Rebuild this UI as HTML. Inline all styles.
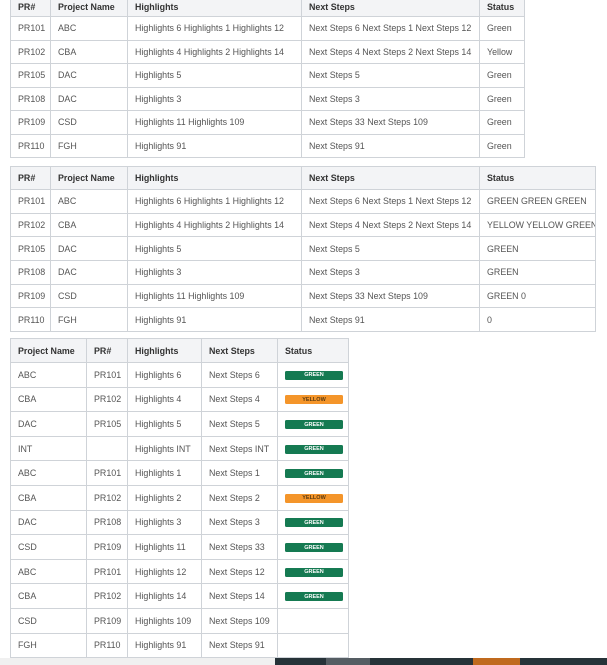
<!DOCTYPE html>
<html><head><meta charset="utf-8"><style>
body{margin:0;width:607px;height:665px;overflow:hidden;background:#fff;font-family:"Liberation Sans",sans-serif;font-size:8.9px;color:#555;position:relative}
table{position:absolute;border-collapse:collapse;table-layout:fixed}
td,th{border:1px solid #cfd3d8;padding:0 0 0 7px;text-align:left;white-space:nowrap;overflow:hidden}
th{background:#f3f4f6;color:#333;font-weight:bold;font-size:8.9px}
#t1{left:10px;top:-4px;width:514px}
#t1 th{height:19px}#t1 td{height:22.5px}
#t2{left:10px;top:166px;width:585px}
#t2 th{height:22px}#t2 td{height:22.7px}
#t3{left:10px;top:338px;width:338px}
#t3 th{height:23px}#t3 td{height:23.6px}
.b{display:inline-flex;align-items:center;justify-content:center;width:58px;height:9px;border-radius:1.5px;color:#fff;font-weight:bold;font-size:5.5px;vertical-align:middle}
.g{background:#157a52}.y{background:#f4952a;color:#5a3a10}
.bar{position:absolute;top:658px;height:7px}
</style></head><body>
<table id="t1"><colgroup><col style="width:40px"><col style="width:77px"><col style="width:174px"><col style="width:178px"><col style="width:45px"></colgroup>
<tr><th>PR#</th><th>Project Name</th><th>Highlights</th><th>Next Steps</th><th>Status</th></tr>
<tr><td>PR101</td><td>ABC</td><td>Highlights 6 Highlights 1 Highlights 12</td><td>Next Steps 6 Next Steps 1 Next Steps 12</td><td>Green</td></tr>
<tr><td>PR102</td><td>CBA</td><td>Highlights 4 Highlights 2 Highlights 14</td><td>Next Steps 4 Next Steps 2 Next Steps 14</td><td>Yellow</td></tr>
<tr><td>PR105</td><td>DAC</td><td>Highlights 5</td><td>Next Steps 5</td><td>Green</td></tr>
<tr><td>PR108</td><td>DAC</td><td>Highlights 3</td><td>Next Steps 3</td><td>Green</td></tr>
<tr><td>PR109</td><td>CSD</td><td>Highlights 11 Highlights 109</td><td>Next Steps 33 Next Steps 109</td><td>Green</td></tr>
<tr><td>PR110</td><td>FGH</td><td>Highlights 91</td><td>Next Steps 91</td><td>Green</td></tr>
</table>
<table id="t2"><colgroup><col style="width:40px"><col style="width:77px"><col style="width:174px"><col style="width:178px"><col style="width:116px"></colgroup>
<tr><th>PR#</th><th>Project Name</th><th>Highlights</th><th>Next Steps</th><th>Status</th></tr>
<tr><td>PR101</td><td>ABC</td><td>Highlights 6 Highlights 1 Highlights 12</td><td>Next Steps 6 Next Steps 1 Next Steps 12</td><td>GREEN GREEN GREEN</td></tr>
<tr><td>PR102</td><td>CBA</td><td>Highlights 4 Highlights 2 Highlights 14</td><td>Next Steps 4 Next Steps 2 Next Steps 14</td><td>YELLOW YELLOW GREEN</td></tr>
<tr><td>PR105</td><td>DAC</td><td>Highlights 5</td><td>Next Steps 5</td><td>GREEN</td></tr>
<tr><td>PR108</td><td>DAC</td><td>Highlights 3</td><td>Next Steps 3</td><td>GREEN</td></tr>
<tr><td>PR109</td><td>CSD</td><td>Highlights 11 Highlights 109</td><td>Next Steps 33 Next Steps 109</td><td>GREEN 0</td></tr>
<tr><td>PR110</td><td>FGH</td><td>Highlights 91</td><td>Next Steps 91</td><td>0</td></tr>
</table>
<table id="t3"><colgroup><col style="width:76px"><col style="width:41px"><col style="width:74px"><col style="width:76px"><col style="width:71px"></colgroup>
<tr><th>Project Name</th><th>PR#</th><th>Highlights</th><th>Next Steps</th><th>Status</th></tr>
<tr><td>ABC</td><td>PR101</td><td>Highlights 6</td><td>Next Steps 6</td><td><span class="b g">GREEN</span></td></tr>
<tr><td>CBA</td><td>PR102</td><td>Highlights 4</td><td>Next Steps 4</td><td><span class="b y">YELLOW</span></td></tr>
<tr><td>DAC</td><td>PR105</td><td>Highlights 5</td><td>Next Steps 5</td><td><span class="b g">GREEN</span></td></tr>
<tr><td>INT</td><td></td><td>Highlights INT</td><td>Next Steps INT</td><td><span class="b g">GREEN</span></td></tr>
<tr><td>ABC</td><td>PR101</td><td>Highlights 1</td><td>Next Steps 1</td><td><span class="b g">GREEN</span></td></tr>
<tr><td>CBA</td><td>PR102</td><td>Highlights 2</td><td>Next Steps 2</td><td><span class="b y">YELLOW</span></td></tr>
<tr><td>DAC</td><td>PR108</td><td>Highlights 3</td><td>Next Steps 3</td><td><span class="b g">GREEN</span></td></tr>
<tr><td>CSD</td><td>PR109</td><td>Highlights 11</td><td>Next Steps 33</td><td><span class="b g">GREEN</span></td></tr>
<tr><td>ABC</td><td>PR101</td><td>Highlights 12</td><td>Next Steps 12</td><td><span class="b g">GREEN</span></td></tr>
<tr><td>CBA</td><td>PR102</td><td>Highlights 14</td><td>Next Steps 14</td><td><span class="b g">GREEN</span></td></tr>
<tr><td>CSD</td><td>PR109</td><td>Highlights 109</td><td>Next Steps 109</td><td></td></tr>
<tr><td>FGH</td><td>PR110</td><td>Highlights 91</td><td>Next Steps 91</td><td></td></tr>
</table>
<div class="bar" style="left:0;width:275px;background:#f0f0f0"></div>
<div class="bar" style="left:275px;width:332px;background:#263238"></div>
<div class="bar" style="left:326px;width:44px;background:#555d63"></div>
<div class="bar" style="left:473px;width:47px;background:#c06a1e"></div>
</body></html>
